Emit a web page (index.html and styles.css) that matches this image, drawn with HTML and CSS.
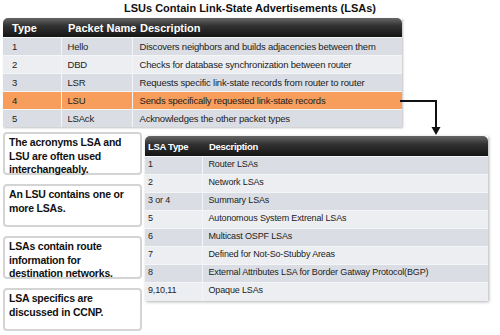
FILE: index.html
```html
<!DOCTYPE html>
<html>
<head>
<meta charset="utf-8">
<link rel="stylesheet" href="styles.css">
</head>
<body>
<div class="page">
  <h1 class="title">LSUs Contain Link-State Advertisements (LSAs)</h1>
  <table class="packets">
    <thead>
      <tr><th class="c1">Type</th><th class="c2">Packet Name</th><th class="c3">Description</th></tr>
    </thead>
    <tbody>
      <tr class="dark"><td>1</td><td>Hello</td><td>Discovers neighbors and builds adjacencies between them</td></tr>
      <tr class="light"><td>2</td><td>DBD</td><td>Checks for database synchronization between router</td></tr>
      <tr class="dark"><td>3</td><td>LSR</td><td>Requests specific link-state records from router to router</td></tr>
      <tr class="hl"><td>4</td><td>LSU</td><td>Sends specifically requested link-state records</td></tr>
      <tr class="dark"><td>5</td><td>LSAck</td><td>Acknowledges the other packet types</td></tr>
    </tbody>
  </table>
  <div class="lower">
    <div class="notes">
      <div class="note">The acronyms LSA and LSU are often used interchangeably.</div>
      <div class="note">An LSU contains one or more LSAs.</div>
      <div class="note">LSAs contain route information for destination networks.</div>
      <div class="note">LSA specifics are discussed in CCNP.</div>
    </div>
    <table class="lsas">
      <thead>
        <tr><th class="d1">LSA Type</th><th class="d2">Description</th></tr>
      </thead>
      <tbody>
        <tr class="dark"><td>1</td><td>Router LSAs</td></tr>
        <tr class="light"><td>2</td><td>Network LSAs</td></tr>
        <tr class="dark"><td>3 or 4</td><td>Summary LSAs</td></tr>
        <tr class="light"><td>5</td><td>Autonomous System Extrenal LSAs</td></tr>
        <tr class="dark"><td>6</td><td>Multicast OSPF LSAs</td></tr>
        <tr class="light"><td>7</td><td>Defined for Not-So-Stubby Areas</td></tr>
        <tr class="dark"><td>8</td><td>External Attributes LSA for Border Gatway Protocol(BGP)</td></tr>
        <tr class="light"><td>9,10,11</td><td>Opaque LSAs</td></tr>
      </tbody>
    </table>
  </div>
  <svg class="arrow" width="50" height="45" viewBox="0 0 50 45">
    <path d="M0 6 H36 V34" fill="none" stroke="#111" stroke-width="2"/>
    <path d="M31.5 32 L40.5 32 L36 40 Z" fill="#111"/>
  </svg>
</div>
</body>
</html>
```
FILE: styles.css
```css
html, body {
  margin: 0;
  padding: 0;
  background: #fff;
}
.page {
  position: relative;
  width: 500px;
  height: 335px;
  font-family: "Liberation Sans", Arial, sans-serif;
  color: #222;
}
.title {
  margin: 0;
  padding-top: 2px;
  height: 16px;
  font-size: 11px;
  font-weight: bold;
  text-align: center;
  color: #111;
  line-height: 13px;
}
table {
  border-collapse: collapse;
  border-spacing: 0;
}
.packets {
  margin-left: 3px;
  width: 399px;
  table-layout: fixed;
  font-size: 9.5px;
  box-shadow: 1px 1px 2px rgba(0,0,0,0.25);
}
.packets th {
  height: 19px;
  padding: 0 0 0 9px;
  text-align: left;
  color: #fff;
  font-size: 11px;
  font-weight: bold;
  white-space: nowrap;
  background: linear-gradient(#666 0%, #333 40%, #141414 100%);
}
.packets th.c1 { width: 49px; border-top-left-radius: 5px; }
.packets th.c2 { width: 64px; padding-left: 7px; }
.packets th.c3 { border-top-right-radius: 5px; padding-left: 8px; }
.packets td {
  height: 17px;
  padding: 0 0 0 9px;
  border-top: 1px solid #f4f5f7;
  border-left: 1px solid #f4f5f7;
  white-space: nowrap;
  letter-spacing: -0.2px;
}
.packets td:first-child { border-left: none; }
.packets td:nth-child(2) { padding-left: 6px; }
.packets td:nth-child(3) { padding-left: 7px; }
.dark td { background: #dadee4; }
.light td { background: #eceef2; }
.hl td { background: #f89e5c; }

.lower {
  display: flex;
  align-items: flex-start;
  margin-top: 4px;
}
.notes {
  display: flex;
  flex-direction: column;
  gap: 9px;
  margin-left: 3px;
  margin-top: 1px;
  width: 139px;
}
.note {
  box-sizing: border-box;
  height: 43px;
  border: 2px solid #d4d4d4;
  border-radius: 4px;
  padding: 2px 3px 0 4px;
  font-size: 10.5px;
  font-weight: bold;
  letter-spacing: -0.2px;
  line-height: 13.5px;
  color: #111;
}
.lsas {
  margin-left: 3px;
  margin-top: 5px;
  width: 343px;
  table-layout: fixed;
  font-size: 9px;
  box-shadow: 1px 1px 3px rgba(0,0,0,0.3);
}
.lsas th {
  height: 20px;
  padding: 0 0 0 3px;
  text-align: left;
  color: #fff;
  font-size: 9.5px;
  font-weight: bold;
  letter-spacing: -0.3px;
  background: linear-gradient(#666 0%, #333 40%, #141414 100%);
}
.lsas th.d1 { width: 54px; border-top-left-radius: 5px; }
.lsas th.d2 { border-top-right-radius: 5px; padding-left: 7px; }
.lsas td {
  height: 18px;
  box-sizing: border-box;
  padding: 2px 0 0 3px;
  vertical-align: top;
  border-top: 1px solid #f4f5f7;
  border-left: 1px solid #f4f5f7;
  white-space: nowrap;
  letter-spacing: -0.15px;
}
.lsas td:first-child { border-left: none; }
.lsas td:nth-child(2) { padding-left: 6px; }
.arrow {
  position: absolute;
  left: 400px;
  top: 95px;
}
```
